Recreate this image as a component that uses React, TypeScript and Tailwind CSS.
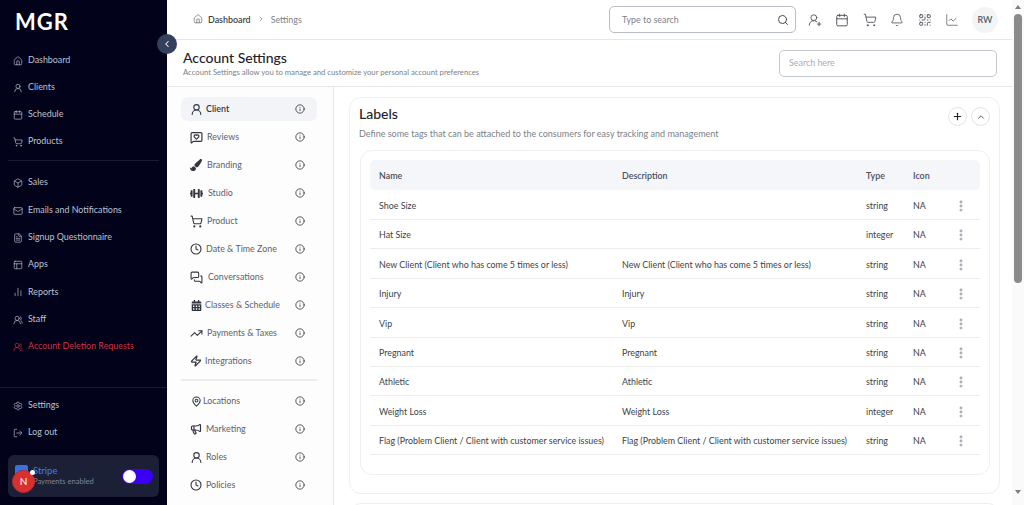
import type { ReactNode } from "react";
import {
  BarChart2,
  Bell,
  Box,
  Calendar,
  ChevronLeft,
  ChevronRight,
  ChevronUp,
  Clock,
  EllipsisVertical,
  FileText,
  Home,
  Info,
  LineChart,
  LogOut,
  Mail,
  MapPin,
  Megaphone,
  MessageSquareHeart,
  MessagesSquare,
  PanelsTopLeft,
  Plus,
  QrCode,
  Search,
  Settings,
  ShoppingCart,
  TrendingUp,
  UserRound,
  UserRoundPlus,
  UsersRound,
  Zap,
} from "lucide-react";
import { FaCalendarAlt, FaDumbbell, FaPaintBrush } from "react-icons/fa";

const mainNav = [
  { label: "Dashboard", icon: Home },
  { label: "Clients", icon: UserRound },
  { label: "Schedule", icon: Calendar },
  { label: "Products", icon: ShoppingCart },
];

const secondNav = [
  { label: "Sales", icon: Box, h: "h-[29px]" },
  { label: "Emails and Notifications", icon: Mail, h: "h-[27px]" },
  { label: "Signup Questionnaire", icon: FileText, h: "h-[27px]" },
  { label: "Apps", icon: PanelsTopLeft, h: "h-[27px]" },
  { label: "Reports", icon: BarChart2, h: "h-[28px]" },
  { label: "Staff", icon: UsersRound, h: "h-[27px]" },
];

const settingsTop: { label: string; icon: ReactNode; gap: string }[] = [
  { label: "Reviews", icon: <MessageSquareHeart size={13} strokeWidth={2.2} />, gap: "gap-[4px]" },
  { label: "Branding", icon: <FaPaintBrush size={12} />, gap: "gap-[5px]" },
  { label: "Studio", icon: <FaDumbbell size={13} />, gap: "gap-[5px]" },
  { label: "Product", icon: <ShoppingCart size={13} />, gap: "gap-[4px]" },
  { label: "Date & Time Zone", icon: <Clock size={12} strokeWidth={2.2} />, gap: "gap-[4px]" },
  { label: "Conversations", icon: <MessagesSquare size={13} />, gap: "gap-[5px]" },
  { label: "Classes & Schedule", icon: <FaCalendarAlt size={11} />, gap: "gap-[3px]" },
  { label: "Payments & Taxes", icon: <TrendingUp size={13} />, gap: "gap-[4px]" },
  { label: "Integrations", icon: <Zap size={12} strokeWidth={2.5} />, gap: "gap-[3px]" },
];

const settingsBottom: { label: string; icon: ReactNode; gap: string }[] = [
  { label: "Locations", icon: <MapPin size={11} strokeWidth={2.2} />, gap: "gap-[1px]" },
  { label: "Marketing", icon: <Megaphone size={12} strokeWidth={2.4} />, gap: "gap-[4px]" },
  { label: "Roles", icon: <UserRound size={13} />, gap: "gap-[3px]" },
  { label: "Policies", icon: <Clock size={12} strokeWidth={2.2} />, gap: "gap-[4px]" },
];

const rows = [
  ["Shoe Size", "", "string", "h-[30px]"],
  ["Hat Size", "", "integer", "h-[29px]"],
  ["New Client (Client who has come 5 times or less)", "New Client (Client who has come 5 times or less)", "string", "h-[30px]"],
  ["Injury", "Injury", "string", "h-[29px]"],
  ["Vip", "Vip", "string", "h-[30px]"],
  ["Pregnant", "Pregnant", "string", "h-[29px]"],
  ["Athletic", "Athletic", "string", "h-[29px]"],
  ["Weight Loss", "Weight Loss", "integer", "h-[30px]"],
  ["Flag (Problem Client / Client with customer service issues)", "Flag (Problem Client / Client with customer service issues)", "string", "h-[29px]"],
];

function SideLink({ label, icon: Icon, h = "h-[27px]", red = false }: { label: string; icon: typeof Home; h?: string; red?: boolean }) {
  return (
    <div className={`flex items-center gap-[5px] pl-[13px] ${h} ${red ? "text-[#d0303f]" : "text-[#bcc3d2]"}`}>
      <Icon size={10} strokeWidth={1.6} />
      <span className="text-[8.9px] leading-none whitespace-nowrap">{label}</span>
    </div>
  );
}

function SettingsLink({ label, icon, gap }: { label: string; icon: ReactNode; gap: string }) {
  return (
    <div className="flex h-[28px] items-center justify-between pl-[9px] pr-[12px] text-[#5b5f6b]">
      <div className={`flex items-center ${gap}`}>
        <span className="flex min-w-[12px] justify-center text-[#33363f]">{icon}</span>
        <span className="text-[8.9px] leading-none whitespace-nowrap">{label}</span>
      </div>
      <Info size={10} strokeWidth={2} className="text-[#33363f]" />
    </div>
  );
}

export default function App() {
  return (
    <div className="flex h-[505px] w-[1024px] overflow-hidden bg-white font-['Lato',sans-serif]">
      {/* Sidebar */}
      <aside className="relative flex h-full w-[167px] shrink-0 flex-col bg-[#02021a]">
        <div className="h-[47px] pl-[15px] pt-[10px] text-[22px] leading-[24px] font-bold tracking-[1px] text-white">MGR</div>
        {mainNav.map((item) => (
          <SideLink key={item.label} {...item} />
        ))}
        <div className="mx-[8px] mt-[5px] mb-[7px] h-px bg-[#1a1c33]" />
        {secondNav.map((item) => (
          <SideLink key={item.label} {...item} />
        ))}
        <SideLink label="Account Deletion Requests" icon={UsersRound} red />
        <div className="mt-[27px] h-px bg-[#1a1c33]" />
        <div className="mt-[4px]">
          <SideLink label="Settings" icon={Settings} />
          <SideLink label="Log out" icon={LogOut} />
        </div>
        <div className="relative mx-[8px] mt-[9px] flex h-[42px] items-center justify-between rounded-[6px] bg-[#1b2036] pl-[7px] pr-[6px]">
          <div className="flex items-center gap-[5px]">
            <div className="mb-[8px] h-[14px] w-[13px] rounded-[2px] bg-[#3b6fe0]" />
            <div className="flex flex-col gap-[2px]">
              <span className="text-[9.5px] leading-none text-[#3f7ff0]">Stripe</span>
              <span className="text-[7.6px] leading-none text-[#7d8498]">Payments enabled</span>
            </div>
          </div>
          <div className="flex h-[15px] w-[31px] items-center rounded-full bg-[#3a00f5] pl-px">
            <div className="size-[13px] rounded-full bg-white" />
          </div>
          <div className="absolute left-[4px] top-[15px] flex size-[23px] items-center justify-center rounded-full border border-[#b82a2a] bg-[#d9302f] text-[10px] text-white">N</div>
          <div className="absolute left-[22px] top-[15px] size-[5px] rounded-full bg-white" />
        </div>
        <button className="absolute left-[157px] top-[34px] z-10 flex size-[20px] items-center justify-center rounded-full bg-[#34405c] text-white">
          <ChevronLeft size={10} strokeWidth={2.5} />
        </button>
      </aside>

      {/* Main column */}
      <div className="flex h-full min-w-0 flex-1 flex-col">
        <header className="flex h-[40px] shrink-0 items-center justify-between border-b border-[#e6e7ea] pl-[26px] pr-[14px]">
          <div className="flex items-center text-[8.9px]">
            <Home size={10} strokeWidth={1.5} className="mr-[5px] text-[#555]" />
            <span className="font-semibold text-[#3c3f47]">Dashboard</span>
            <ChevronRight size={8} className="mx-[6px] text-[#777]" />
            <span className="text-[#7b7f88]">Settings</span>
          </div>
          <div className="flex items-center">
            <div className="flex h-[27px] w-[187px] items-center justify-between rounded-[5px] border border-[#b9bdc6] pl-[12px] pr-[6px]">
              <span className="text-[8.9px] text-[#7b7f88]">Type to search</span>
              <Search size={12} strokeWidth={1.8} className="text-[#33363f]" />
            </div>
            <div className="ml-[12px] flex items-center gap-[13.4px] text-[#4a4e59]">
              <UserRoundPlus size={14} strokeWidth={1.5} />
              <Calendar size={14} strokeWidth={1.6} />
              <ShoppingCart size={14} strokeWidth={1.5} />
              <Bell size={14} strokeWidth={1.4} />
              <QrCode size={14} strokeWidth={1.6} />
              <LineChart size={14} strokeWidth={1.2} />
            </div>
            <div className="ml-[13px] flex size-[26px] items-center justify-center rounded-full bg-[#f3f4f6] text-[9px] font-semibold text-[#5b5f6b]">RW</div>
          </div>
        </header>

        <div className="flex h-[47px] shrink-0 items-center justify-between border-b border-[#e6e7ea] pl-[16px] pr-[15px]">
          <div className="flex flex-col gap-[1px]">
            <h1 className="text-[14px] leading-[16px] font-medium text-[#1f2229]">Account Settings</h1>
            <p className="text-[7.7px] leading-[10px] text-[#7b7f88]">Account Settings allow you to manage and customize your personal account preferences</p>
          </div>
          <div className="flex h-[27px] w-[218px] items-center rounded-[5px] border border-[#c5c8d0] pl-[9px] text-[8.9px] text-[#a8acb5]">Search here</div>
        </div>

        <div className="flex min-h-0 flex-1">
          {/* Settings nav */}
          <nav className="h-full w-[167px] shrink-0 overflow-hidden border-r border-[#e6e7ea] bg-[#fdfdfd] pl-[14px] pr-[16px] pt-[10px]">
            <div className="mb-[2px] flex h-[24px] items-center justify-between rounded-[7px] bg-[#f3f4f8] pl-[9px] pr-[12px] text-[#33363f]">
              <div className="flex items-center gap-[3px]">
                <UserRound size={13} strokeWidth={2} />
                <span className="text-[8.9px] leading-none font-semibold">Client</span>
              </div>
              <Info size={10} strokeWidth={2} />
            </div>
            {settingsTop.map((item) => (
              <SettingsLink key={item.label} {...item} />
            ))}
            <div className="mt-[4px] mb-[6px] h-[2px] bg-[#ececef]" />
            {settingsBottom.map((item) => (
              <SettingsLink key={item.label} {...item} />
            ))}
          </nav>

          {/* Labels */}
          <main className="min-w-0 flex-1 overflow-hidden pl-[15px] pr-[12px] pt-[10px]">
            <section className="h-[397px] rounded-[12px] border border-[#eeeff2] pl-[9px] pr-[9px] pt-[8px]">
              <div className="flex items-start justify-between">
                <div>
                  <h2 className="text-[14px] leading-[16px] font-medium text-[#1f2229]">Labels</h2>
                  <p className="mt-[6px] text-[9px] leading-[12px] text-[#7b7f88]">Define some tags that can be attached to the consumers for easy tracking and management</p>
                </div>
                <div className="mt-[1px] flex gap-[4px]">
                  <button className="flex size-[19px] items-center justify-center rounded-full border border-[#e3e4e8] text-[#1f2229]">
                    <Plus size={11} strokeWidth={2.5} />
                  </button>
                  <button className="flex size-[19px] items-center justify-center rounded-full border border-[#e3e4e8] text-[#33363f]">
                    <ChevronUp size={10} strokeWidth={2} />
                  </button>
                </div>
              </div>
              <div className="mt-[10px] ml-[1px] h-[325px] rounded-[12px] border border-[#eeeff2] px-[9px] pt-[9px]">
                <div className="flex h-[30px] items-center rounded-[5px] bg-[#f5f6fa] pt-[1px] text-[8.9px] font-semibold text-[#4a4e59]">
                  <span className="w-[243px] pl-[9px]">Name</span>
                  <span className="w-[253px] pl-[9px]">Description</span>
                  <span className="w-[47px]">Type</span>
                  <span>Icon</span>
                </div>
                {rows.map(([name, desc, type, h]) => (
                  <div key={name} className={`flex items-center border-b border-[#eceded] pt-[2px] text-[8.9px] text-[#3c3f47] ${h}`}>
                    <span className="w-[243px] pl-[9px] whitespace-nowrap">{name}</span>
                    <span className="w-[253px] pl-[9px] whitespace-nowrap">{desc}</span>
                    <span className="w-[47px]">{type}</span>
                    <span className="w-[41px]">NA</span>
                    <EllipsisVertical size={14} strokeWidth={3} className="text-[#a8acb5]" />
                  </div>
                ))}
              </div>
            </section>
            <section className="mt-[9px] h-[40px] rounded-[12px] border border-[#eeeff2]" />
          </main>
        </div>
      </div>

      {/* Page scrollbar */}
      <div className="flex h-full w-[12px] shrink-0 flex-col items-center bg-[#fafafa]">
        <div className="mt-[5px] h-0 w-0 border-x-[3px] border-b-[4px] border-x-transparent border-b-[#7d7d7d]" />
        <div className="mt-[5px] h-[269px] w-[8px] rounded-full bg-[#8b8b8b]" />
        <div className="mt-[207px] h-0 w-0 border-x-[3px] border-t-[4px] border-x-transparent border-t-[#7d7d7d]" />
      </div>
    </div>
  );
}
